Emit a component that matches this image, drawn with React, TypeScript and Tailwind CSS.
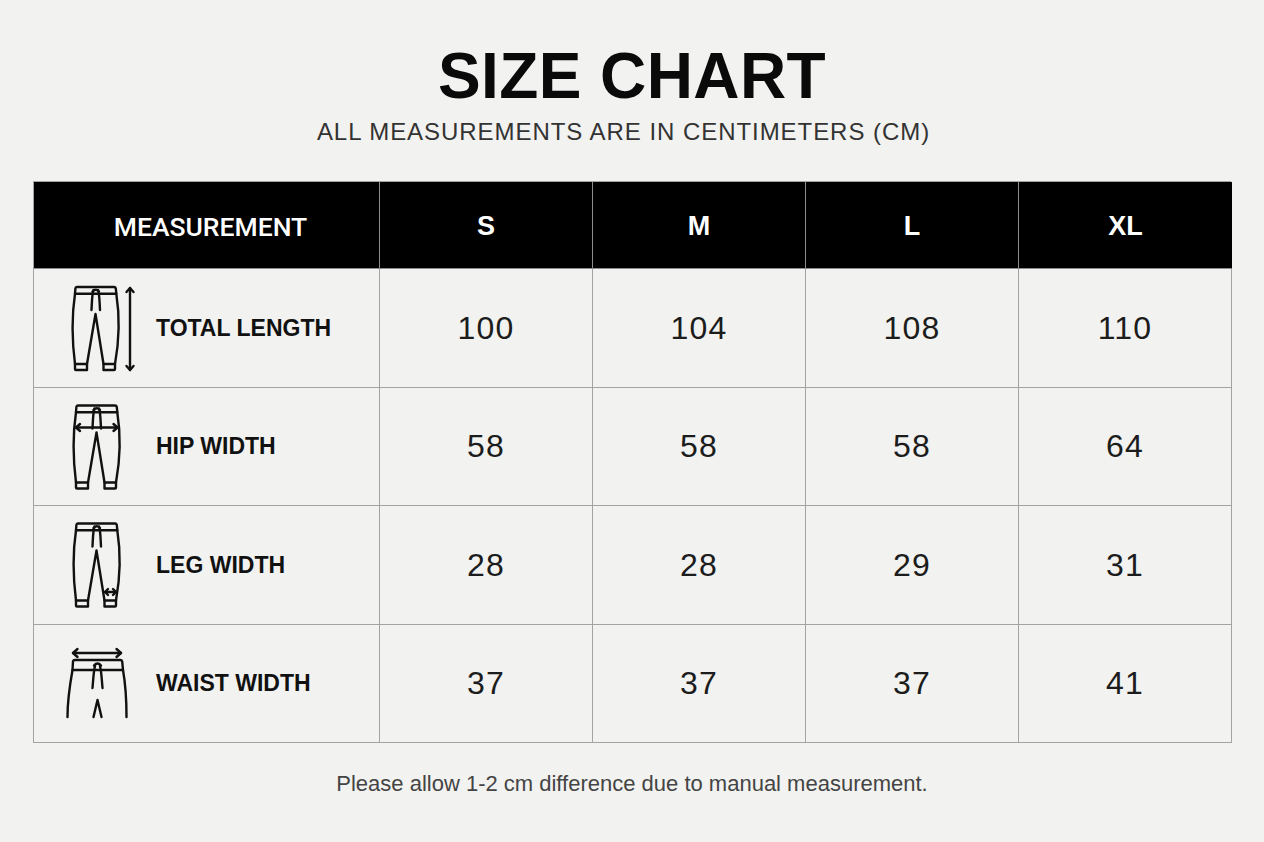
import React from "react";

const S = { stroke: "#111", strokeWidth: 2.4, fill: "none", strokeLinecap: "round" as const, strokeLinejoin: "round" as const };

function PantsBody({ dx = 0, dy = 0 }: { dx?: number; dy?: number }) {
  return (
    <g transform={`translate(${dx} ${dy})`} {...S}>
      <path d="M6.7 3 L44 3 Q45.5 3 45.8 4.5 L46.3 9.7 L5 9.7 L5.4 4.5 Q5.6 3 6.7 3 Z" />
      <path d="M5 9.7 C2 30 1.8 55 5 80" />
      <path d="M5 80 L17 80 L17 86 L6 86 Q5 86 5 85 Z" />
      <path d="M17 80 L25.5 30 L33.5 80" />
      <path d="M33.5 80 L45 80 L45 85 Q45 86 44 86 L33.5 86 Z" />
      <path d="M46.3 9.7 C49.5 30 49.5 55 45 80" />
      <path d="M23.5 6 C22 10 22 17 21.5 26" />
      <path d="M28 6 C29.5 10 29.5 17 30 26" />
      <path d="M22.5 7.5 Q25.7 4 29 7.5" />
    </g>
  );
}

function IconTotal() {
  return (
    <svg width="66" height="88" viewBox="0 0 66 88" overflow="visible">
      <PantsBody />
      <g {...S}>
        <path d="M60 4 L60 86" />
        <path d="M56.5 8 L60 4 L63.5 8" />
        <path d="M56.5 82 L60 86 L63.5 82" />
      </g>
    </svg>
  );
}

function IconHip() {
  return (
    <svg width="66" height="88" viewBox="0 0 66 88" overflow="visible">
      <PantsBody dx={1} dy={0.5} />
      <g {...S}>
        <path d="M6 25.5 L47.5 25.5" />
        <path d="M10 22 L6 25.5 L10 29" />
        <path d="M43.5 22 L47.5 25.5 L43.5 29" />
      </g>
    </svg>
  );
}

function IconLeg() {
  return (
    <svg width="66" height="88" viewBox="0 0 66 88" overflow="visible">
      <PantsBody dx={1} dy={-0.5} />
      <g {...S}>
        <path d="M35 71 L46 71" />
        <path d="M38 68 L35 71 L38 74" />
        <path d="M43 68 L46 71 L43 74" />
      </g>
    </svg>
  );
}

function IconWaist() {
  return (
    <svg width="66" height="88" viewBox="0 0 66 88" overflow="visible">
      <g {...S}>
        <path d="M3 14 L51 14" />
        <path d="M7.5 10 L3 14 L7.5 18" />
        <path d="M46.5 10 L51 14 L46.5 18" />
        <path d="M4.5 21 L50.5 21 Q52 21 52.2 22.5 L53 31 L2.5 31 L3 22.5 Q3.2 21 4.5 21 Z" />
        <path d="M2.5 31 C0 45 -2.5 60 -2.5 78" />
        <path d="M53 31 C55.5 45 56.5 60 56.5 78" />
        <path d="M23.5 78 L27.5 61 L31.5 78" />
        <path d="M25 27 C23.5 33 23.3 40 22.5 49" />
        <path d="M30 27 C31.5 33 31.7 40 32.5 49" />
        <path d="M24 26.5 Q27.5 22.5 31 26.5" />
      </g>
    </svg>
  );
}

const rows = [
  { label: "TOTAL LENGTH", icon: <IconTotal />, v: ["100", "104", "108", "110"] },
  { label: "HIP WIDTH", icon: <IconHip />, v: ["58", "58", "58", "64"] },
  { label: "LEG WIDTH", icon: <IconLeg />, v: ["28", "28", "29", "31"] },
  { label: "WAIST WIDTH", icon: <IconWaist />, v: ["37", "37", "37", "41"] },
];

export default function App() {
  return (
    <div
      className="w-full h-[842px] bg-[#f2f2f0] flex flex-col items-center pt-[44px]"
      style={{ fontFamily: '"Liberation Sans", Arial, sans-serif' }}
    >
      <h1 className="text-[64px] leading-none font-bold text-[#0a0a0a] tracking-[0.4px]">SIZE CHART</h1>
      <p className="mt-[12px] mr-[17px] text-[24px] leading-none text-[#333] tracking-[0.95px]">
        ALL MEASUREMENTS ARE IN CENTIMETERS (CM)
      </p>

      <div className="mt-[37px] w-[1198px] grid grid-cols-[346px_213px_213px_213px_213px] border-l border-t border-[#a3a3a3]">
        <div
          className="h-[87px] bg-black text-white flex items-center justify-center border-r border-b border-[#8c8c8c] text-[26.5px] font-medium pt-[4px] pl-[8px]"
          style={{ fontFamily: "Roboto, sans-serif" }}
        >
          MEASUREMENT
        </div>
        {["S", "M", "L", "XL"].map((s, i) => (
          <div
            key={s}
            className={`h-[87px] bg-black text-white flex items-center justify-center border-b border-[#8c8c8c] text-[27px] font-bold pt-[3px] ${i === 3 ? "border-r-0" : "border-r"}`}
          >
            {s}
          </div>
        ))}
        {rows.map((r) => (
          <React.Fragment key={r.label}>
            <div className="h-[118.5px] border-r border-b border-[#a3a3a3] flex items-center pl-[36px]">
              <div className="w-[66px] h-[88px] flex items-center">{r.icon}</div>
              <div className="ml-[20px] text-[23px] font-bold text-[#111]">{r.label}</div>
            </div>
            {r.v.map((v, i) => (
              <div
                key={i}
                className="h-[118.5px] border-r border-b border-[#a3a3a3] flex items-center justify-center text-[32px] text-[#1c1c1c] tracking-[1.2px]"
              >
                {v}
              </div>
            ))}
          </React.Fragment>
        ))}
      </div>

      <p className="mt-[30px] text-[22px] leading-none text-[#444]">
        Please allow 1-2 cm difference due to manual measurement.
      </p>
    </div>
  );
}
